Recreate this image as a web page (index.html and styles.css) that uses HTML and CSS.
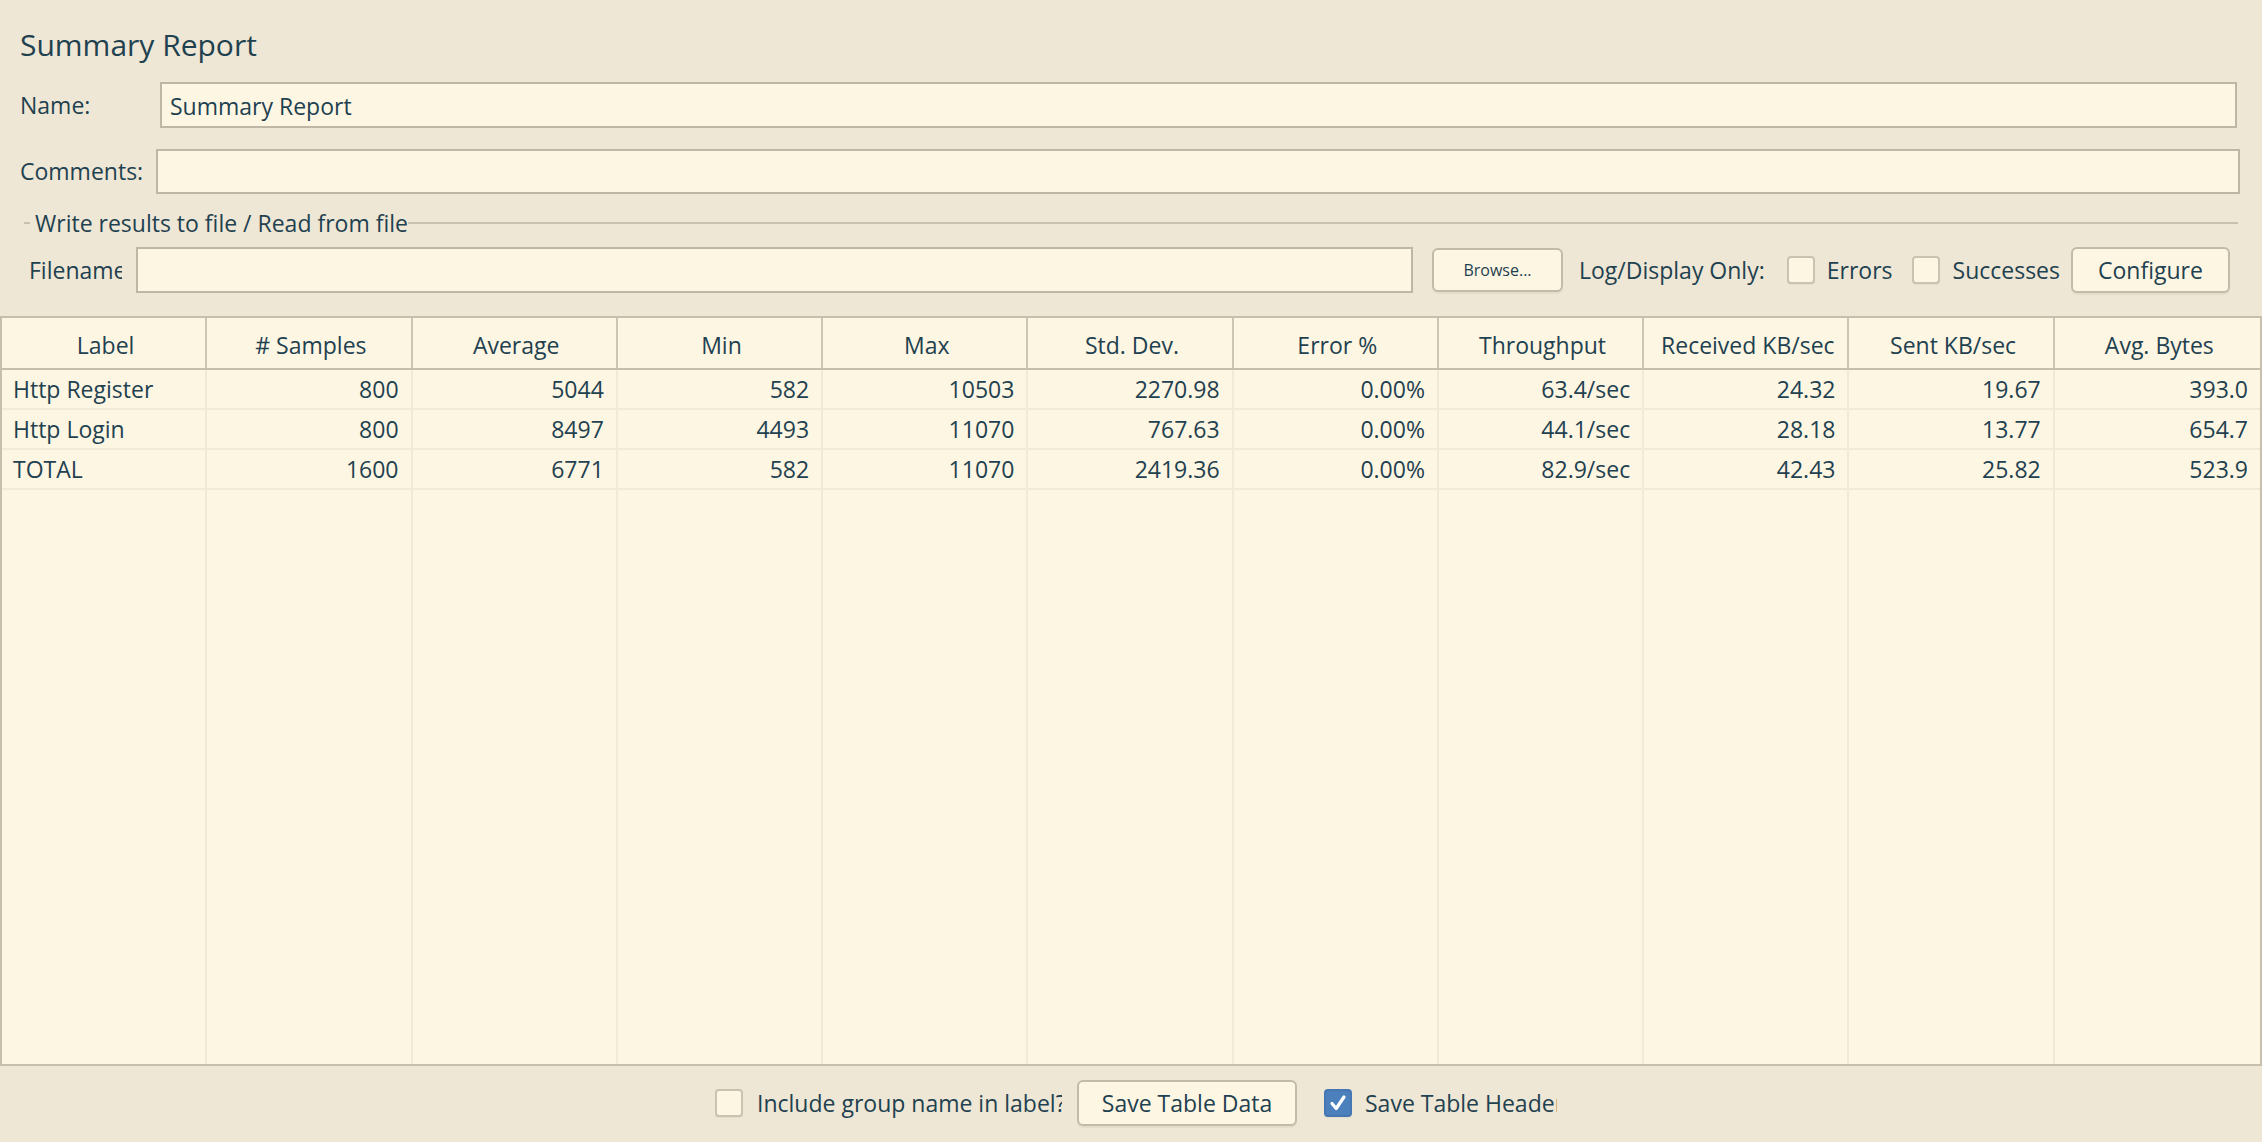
FILE: index.html
```html
<!DOCTYPE html>
<html>
<head>
<meta charset="utf-8">
<link rel="stylesheet" href="styles.css">
</head>
<body>
<div class="app">
  <div class="top">
    <div class="title">Summary Report</div>
    <div class="row row-name">
      <div class="lbl lbl-name">Name:</div>
      <div class="field field-name">Summary Report</div>
    </div>
    <div class="row row-comments">
      <div class="lbl lbl-comments">Comments:</div>
      <div class="field field-comments"></div>
    </div>
    <div class="legend">
      <span class="legend-dash"></span>
      <span class="legend-text">Write results to file / Read from file</span>
      <span class="legend-line"></span>
    </div>
    <div class="row row-file">
      <div class="lbl lbl-file">Filename</div>
      <div class="field field-file"></div>
      <button class="btn btn-browse">Browse...</button>
      <span class="txt txt-log">Log/Display Only:</span>
      <span class="chk chk-errors"></span>
      <span class="txt txt-errors">Errors</span>
      <span class="chk chk-succ"></span>
      <span class="txt txt-succ">Successes</span>
      <button class="btn btn-config">Configure</button>
    </div>
  </div>

  <div class="table">
    <div class="thead">
      <div class="th">Label</div>
      <div class="th"># Samples</div>
      <div class="th">Average</div>
      <div class="th">Min</div>
      <div class="th">Max</div>
      <div class="th">Std. Dev.</div>
      <div class="th">Error %</div>
      <div class="th">Throughput</div>
      <div class="th">Received KB/sec</div>
      <div class="th">Sent KB/sec</div>
      <div class="th">Avg. Bytes</div>
    </div>
    <div class="tr">
      <div class="td td-l">Http Register</div>
      <div class="td">800</div>
      <div class="td">5044</div>
      <div class="td">582</div>
      <div class="td">10503</div>
      <div class="td">2270.98</div>
      <div class="td">0.00%</div>
      <div class="td">63.4/sec</div>
      <div class="td">24.32</div>
      <div class="td">19.67</div>
      <div class="td">393.0</div>
    </div>
    <div class="tr">
      <div class="td td-l">Http Login</div>
      <div class="td">800</div>
      <div class="td">8497</div>
      <div class="td">4493</div>
      <div class="td">11070</div>
      <div class="td">767.63</div>
      <div class="td">0.00%</div>
      <div class="td">44.1/sec</div>
      <div class="td">28.18</div>
      <div class="td">13.77</div>
      <div class="td">654.7</div>
    </div>
    <div class="tr">
      <div class="td td-l">TOTAL</div>
      <div class="td">1600</div>
      <div class="td">6771</div>
      <div class="td">582</div>
      <div class="td">11070</div>
      <div class="td">2419.36</div>
      <div class="td">0.00%</div>
      <div class="td">82.9/sec</div>
      <div class="td">42.43</div>
      <div class="td">25.82</div>
      <div class="td">523.9</div>
    </div>
    <div class="tfill">
      <div class="fc"></div><div class="fc"></div><div class="fc"></div><div class="fc"></div>
      <div class="fc"></div><div class="fc"></div><div class="fc"></div><div class="fc"></div>
      <div class="fc"></div><div class="fc"></div><div class="fc"></div>
    </div>
  </div>

  <div class="footer">
    <span class="chk"></span>
    <span class="txt txt-group">Include group name in label?</span>
    <button class="btn btn-save">Save Table Data</button>
    <span class="chk chk-on"><svg viewBox="0 0 28 28" width="28" height="28"><path d="M8 14.5 L12.2 19.5 L20 8" fill="none" stroke="#ffffff" stroke-width="3.2" stroke-linecap="round" stroke-linejoin="round"/></svg></span>
    <span class="txt txt-header">Save Table Header</span>
  </div>
</div>
</body>
</html>
```

FILE: styles.css
```css
* { box-sizing: border-box; }
html, body {
  margin: 0;
  padding: 0;
  background: #eee7d5;
}
body {
  font-family: "Open Sans", "Noto Sans", sans-serif;
  font-size: 23px;
  color: #1f4150;
}
.app {
  width: 2262px;
  height: 1142px;
  display: flex;
  flex-direction: column;
  overflow: hidden;
}
.top {
  height: 316px;
  display: flex;
  flex-direction: column;
}
.title {
  height: 82px;
  padding: 24px 0 0 20px;
  font-size: 30px;
  line-height: 42px;
}
.row {
  display: flex;
  align-items: center;
}
.lbl {
  flex: none;
  line-height: 46px;
  white-space: nowrap;
}
.field {
  height: 46px;
  background: #fdf6e3;
  border: 2px solid #bfb6a6;
  line-height: 44px;
  padding-left: 8px;
}
.row-name { height: 46px; }
.lbl-name { width: 140px; margin-left: 20px; }
.field-name { flex: 1; margin-right: 25px; }
.row-comments { height: 46px; margin-top: 20px; }
.lbl-comments { width: 136px; margin-left: 20px; }
.field-comments { flex: 1; margin-right: 22px; height: 45px; }

.legend {
  height: 40px;
  margin-top: 9px;
  display: flex;
  align-items: center;
  padding: 0 24px 0 24px;
}
.legend-dash {
  width: 6px;
  height: 2px;
  background: #c9c1b0;
  margin-right: 5px;
}
.legend-text { white-space: nowrap; line-height: 30px; }
.legend-line {
  flex: 1;
  height: 2px;
  background: #c9c1b0;
}

.row-file { height: 46px; margin-top: 4px; }
.lbl-file {
  width: 93px;
  margin-left: 29px;
  margin-right: 14px;
  overflow: hidden;
}
.field-file { width: 1277px; }

.btn {
  font-family: inherit;
  color: inherit;
  background: #fdf6e3;
  border: 2px solid #c3baa9;
  border-radius: 6px;
  box-shadow: 0 2px 0 #e4ddca;
  padding: 0;
}
.btn-browse {
  width: 131px;
  height: 44px;
  margin-left: 19px;
  font-size: 16px;
}
.txt { white-space: nowrap; }
.txt-log { margin-left: 16px; }
.chk {
  flex: none;
  width: 28px;
  height: 28px;
  background: #fdf6e3;
  border: 2px solid #cbc3b2;
  border-radius: 4px;
  box-shadow: 0 1px 0 #e4ddca;
}
.chk-errors { margin-left: 22px; }
.txt-errors { margin-left: 12px; }
.chk-succ { margin-left: 19px; }
.txt-succ { margin-left: 13px; }
.btn-config {
  width: 159px;
  height: 46px;
  margin-left: 11px;
  font-size: 23px;
}

.table {
  height: 750px;
  background: #fdf6e3;
  border: 2px solid #c7beac;
  display: flex;
  flex-direction: column;
}
.thead, .tr, .tfill {
  display: grid;
  grid-template-columns: repeat(11, 1fr);
}
.thead {
  height: 52px;
  border-bottom: 2px solid #c7beac;
}
.th {
  text-align: center;
  line-height: 50px;
  padding-top: 2px;
  padding-left: 4px;
  border-right: 2px solid #cdc5b3;
  white-space: nowrap;
  overflow: hidden;
}
.th:last-child { border-right: none; }
.tr {
  height: 40px;
  border-bottom: 2px solid #f2ead8;
}
.td {
  text-align: right;
  padding-right: 12px;
  line-height: 38px;
  border-right: 2px solid #f2ead8;
  white-space: nowrap;
}
.td:last-child { border-right: none; }
.td-l { text-align: left; padding-left: 11px; }
.tfill { flex: 1; }
.fc { border-right: 2px solid #f2ead8; }
.fc:last-child { border-right: none; }

.footer {
  flex: 1;
  display: flex;
  align-items: center;
  justify-content: center;
  padding-left: 10px;
  padding-bottom: 2px;
}
.txt-group {
  width: 305px;
  overflow: hidden;
  margin-left: 14px;
}
.btn-save {
  width: 220px;
  height: 46px;
  margin-left: 15px;
  font-size: 23px;
}
.chk-on {
  margin-left: 27px;
  background: #4b80bd;
  border-color: #4677b2;
  display: flex;
  align-items: center;
  justify-content: center;
}
.chk-on svg { display: block; margin: -2px; }
.txt-header {
  width: 192px;
  overflow: hidden;
  margin-left: 13px;
}
```
